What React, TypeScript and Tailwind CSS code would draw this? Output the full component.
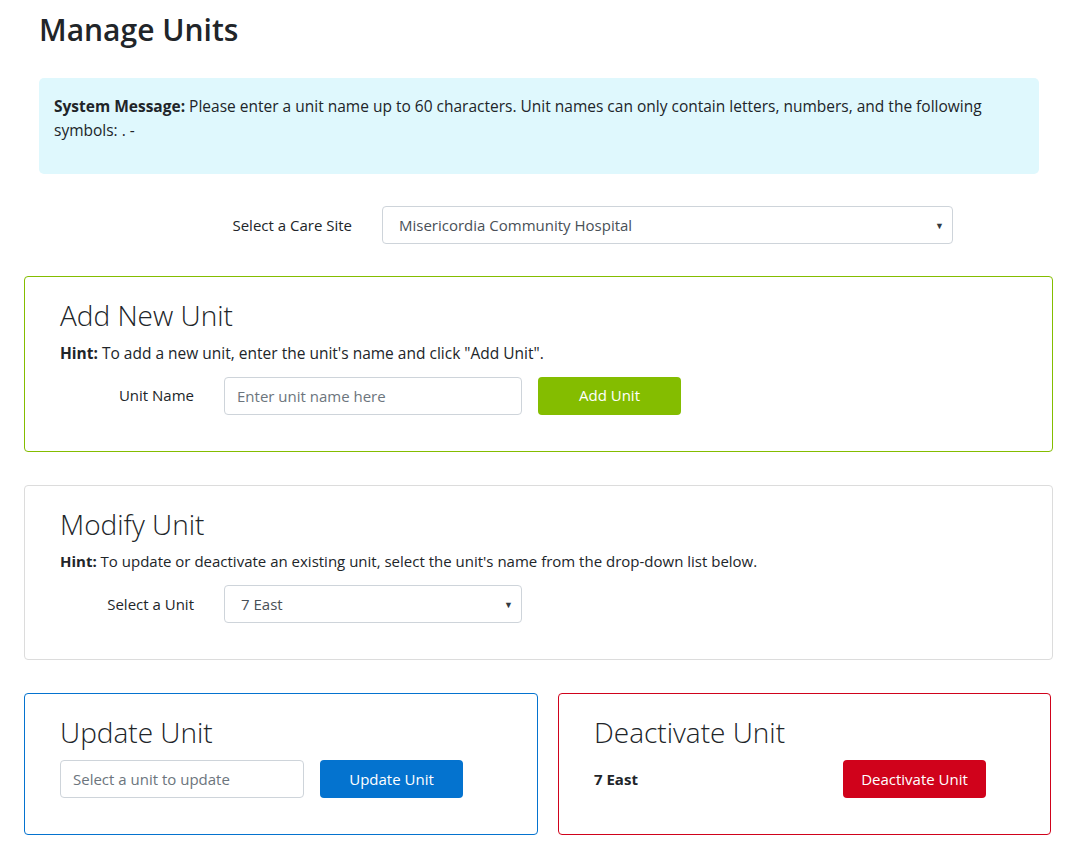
import { ChangeEvent, useState } from "react";

const FONT = { fontFamily: "'Open Sans', 'Noto Sans', 'Liberation Sans', sans-serif" };

const inputClass =
  "h-[38px] rounded-[4px] border border-[#ced4da] bg-white px-3 text-[15px] text-[#495057] placeholder:text-[#6c757d] outline-none";

function Caret() {
  return (
    <span className="pointer-events-none absolute right-[9px] top-1/2 -translate-y-1/2 text-[9px] leading-none text-[#343a40]">
      ▼
    </span>
  );
}

function SelectBox({
  value,
  options,
  onChange,
  className,
}: {
  value: string;
  options: string[];
  onChange: (value: string) => void;
  className: string;
}) {
  return (
    <div className={`relative ${className}`}>
      <select
        value={value}
        onChange={(event: ChangeEvent<HTMLSelectElement>) => onChange(event.target.value)}
        className="h-[38px] w-full appearance-none rounded-[4px] border border-[#ced4da] bg-white pl-4 pr-8 text-[15px] text-[#495057] outline-none"
        style={FONT}
      >
        {options.map((option) => (
          <option key={option}>{option}</option>
        ))}
      </select>
      <Caret />
    </div>
  );
}

export default function App() {
  const [careSite, setCareSite] = useState("Misericordia Community Hospital");
  const [unit, setUnit] = useState("7 East");
  const [newUnit, setNewUnit] = useState("");
  const [updatedName, setUpdatedName] = useState("");

  return (
    <div className="min-h-screen bg-white text-[#212529]" style={FONT}>
      <div className="w-[1079px] pb-6">
        <h1 className="ml-[39px] pt-[12px] text-[30px] font-semibold leading-[1.2]">Manage Units</h1>

        <div className="ml-[39px] mt-[30px] w-[1000px] rounded-[5px] bg-[#dff8fd] px-[15px] pb-[32px] pt-4 text-[15.5px] leading-6">
          <p>
            <span className="font-bold">System Message:</span> Please enter a unit name up to 60
            characters. Unit names can only contain letters, numbers, and the following symbols: . -
          </p>
        </div>

        <div className="ml-[39px] mt-[32px] flex items-center gap-[30px]">
          <label className="w-[313px] text-right text-[15px]">Select a Care Site</label>
          <SelectBox
            value={careSite}
            options={["Misericordia Community Hospital", "Grey Nuns Community Hospital"]}
            onChange={setCareSite}
            className="w-[571px]"
          />
        </div>

        <section className="ml-[24px] mt-[32px] w-[1029px] rounded-[4px] border border-[#84bd00] px-[35px] pb-[36px] pt-[22px]">
          <h2 className="text-[28px] font-light leading-[1.2]">Add New Unit</h2>
          <p className="mt-2 text-[15.5px] leading-6">
            <span className="font-bold">Hint:</span> To add a new unit, enter the unit's name and
            click "Add Unit".
          </p>
          <div className="mt-3 flex items-center">
            <label className="w-[134px] text-right text-[15px]">Unit Name</label>
            <input
              value={newUnit}
              onChange={(event) => setNewUnit(event.target.value)}
              placeholder="Enter unit name here"
              className={`ml-[30px] w-[298px] ${inputClass}`}
              style={FONT}
            />
            <button className="ml-4 h-[38px] w-[143px] rounded-[4px] bg-[#84bd00] text-[15px] text-white">
              Add Unit
            </button>
          </div>
        </section>

        <section className="ml-[24px] mt-[33px] w-[1029px] rounded-[4px] border border-[#dcdcdc] px-[35px] pb-[36px] pt-[22px]">
          <h2 className="text-[28px] font-light leading-[1.2]">Modify Unit</h2>
          <p className="mt-2 text-[15px] leading-6">
            <span className="font-bold">Hint:</span> To update or deactivate an existing unit, select
            the unit's name from the drop-down list below.
          </p>
          <div className="mt-3 flex items-center">
            <label className="w-[134px] text-right text-[15px]">Select a Unit</label>
            <SelectBox
              value={unit}
              options={["7 East", "7 West", "8 East"]}
              onChange={setUnit}
              className="ml-[30px] w-[298px]"
            />
          </div>
        </section>

        <div className="ml-[24px] mt-[33px] flex gap-5">
          <section className="w-[514px] rounded-[4px] border border-[#0473cf] px-[35px] pb-[36px] pt-[22px]">
            <h2 className="text-[28px] font-light leading-[1.2]">Update Unit</h2>
            <div className="mt-[10px] flex items-center">
              <input
                value={updatedName}
                onChange={(event) => setUpdatedName(event.target.value)}
                placeholder="Select a unit to update"
                className={`w-[244px] ${inputClass}`}
                style={FONT}
              />
              <button className="ml-4 h-[38px] w-[143px] rounded-[4px] bg-[#0473cf] text-[15px] text-white">
                Update Unit
              </button>
            </div>
          </section>

          <section className="w-[493px] rounded-[4px] border border-[#d0021b] px-[35px] pb-[36px] pt-[22px]">
            <h2 className="text-[28px] font-light leading-[1.2]">Deactivate Unit</h2>
            <div className="mt-[10px] flex items-center">
              <span className="w-[249px] text-[15px] font-bold">{unit}</span>
              <button className="h-[38px] w-[143px] rounded-[4px] bg-[#d0021b] text-[15px] text-white">
                Deactivate Unit
              </button>
            </div>
          </section>
        </div>
      </div>
    </div>
  );
}
